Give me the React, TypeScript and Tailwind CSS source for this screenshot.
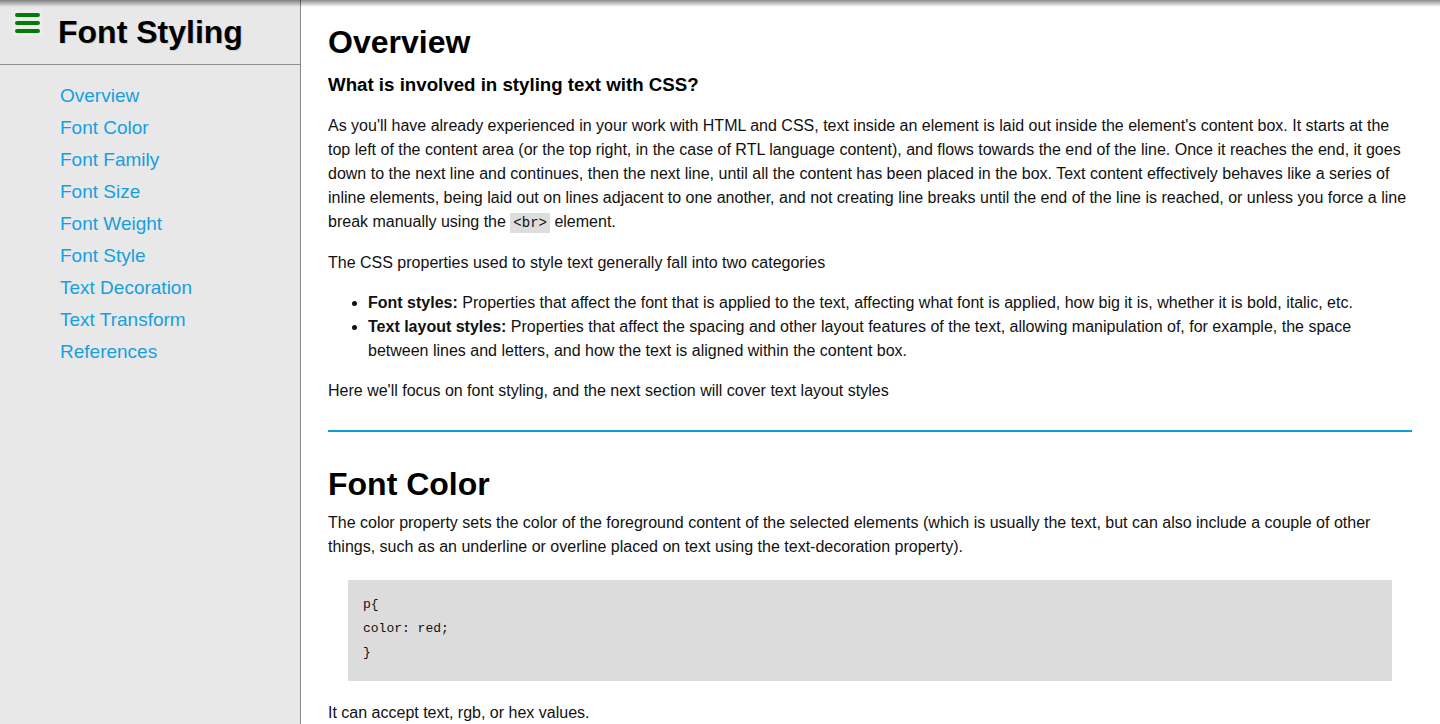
import React from "react";

const links = [
  "Overview",
  "Font Color",
  "Font Family",
  "Font Size",
  "Font Weight",
  "Font Style",
  "Text Decoration",
  "Text Transform",
  "References",
];

export default function App() {
  return (
    <div className="relative flex h-[724px] w-[1440px] overflow-hidden bg-white text-[#111] font-['Liberation_Sans',Arial,sans-serif]">
      <div className="pointer-events-none absolute left-0 right-0 top-0 h-[7px] bg-gradient-to-b from-[rgba(0,0,0,0.45)] to-transparent" />
      <aside className="flex h-full w-[301px] shrink-0 flex-col border-r border-[#8a8a8a] bg-[#e8e8e8]">
        <div className="flex h-[65px] items-start border-b border-[#8f8f8f]">
          <div className="ml-[12px] mt-[10px] flex h-[26px] w-[31px] flex-col items-center justify-between bg-[#ececec] px-[3px] py-[3px]">
            <span className="h-[4px] w-[25px] rounded-full bg-[#067a06]" />
            <span className="h-[4px] w-[25px] rounded-full bg-[#067a06]" />
            <span className="h-[4px] w-[25px] rounded-full bg-[#067a06]" />
          </div>
          <h1 className="ml-[15px] mt-[13px] text-[32px] font-bold leading-[38px] text-black [text-shadow:1px_1px_0_rgba(0,0,0,0.15)]">
            Font Styling
          </h1>
        </div>
        <nav className="flex flex-col pl-[60px] pt-[15px]">
          {links.map((l) => (
            <a key={l} href="#" className="text-[19px] leading-[32px] text-[#169fe0]">
              {l}
            </a>
          ))}
        </nav>
      </aside>
      <main className="flex-1 pl-[27px] pr-[28px] pt-[23px] text-[16px] leading-[24px]">
        <h1 className="text-[32px] font-bold leading-[38px] text-black">Overview</h1>
        <h3 className="mt-[13px] text-[18.7px] font-bold leading-[22px] text-black">
          What is involved in styling text with CSS?
        </h3>
        <p className="mt-[18px]">
          As you'll have already experienced in your work with HTML and CSS, text inside an element is laid out inside the element's content box. It starts at the top left of the content area (or the top right, in the case of RTL language content), and flows towards the end of the line. Once it reaches the end, it goes down to the next line and continues, then the next line, until all the content has been placed in the box. Text content effectively behaves like a series of inline elements, being laid out on lines adjacent to one another, and not creating line breaks until the end of the line is reached, or unless you force a line break manually using the{" "}
          <code className="bg-[#dddddd] px-[3px] py-[2px] font-['Liberation_Mono','Courier_New',monospace] text-[14px]">&lt;br&gt;</code>{" "}
          element.
        </p>
        <p className="mt-[16px]">The CSS properties used to style text generally fall into two categories</p>
        <ul className="mt-[16px] list-disc pl-[40px]">
          <li>
            <b>Font styles:</b> Properties that affect the font that is applied to the text, affecting what font is applied, how big it is, whether it is bold, italic, etc.
          </li>
          <li>
            <b>Text layout styles:</b> Properties that affect the spacing and other layout features of the text, allowing manipulation of, for example, the space between lines and letters, and how the text is aligned within the content box.
          </li>
        </ul>
        <p className="mt-[16px]">Here we'll focus on font styling, and the next section will cover text layout styles</p>
        <div className="mt-[27px] h-[2px] w-full bg-[#0c9fe0]" />
        <h1 className="mt-[33px] text-[32px] font-bold leading-[38px] text-black">Font Color</h1>
        <p className="mt-[8px]">
          The color property sets the color of the foreground content of the selected elements (which is usually the text, but can also include a couple of other things, such as an underline or overline placed on text using the text-decoration property).
        </p>
        <pre className="mx-[20px] mt-[21px] bg-[#dcdcdc] pb-[16px] pl-[15px] pt-[13px] font-['Liberation_Mono','Courier_New',monospace] text-[13px] leading-[24px] text-[#111]">
{`p{
color: red;
}`}
        </pre>
        <p className="mt-[20px]">It can accept text, rgb, or hex values.</p>
      </main>
    </div>
  );
}
